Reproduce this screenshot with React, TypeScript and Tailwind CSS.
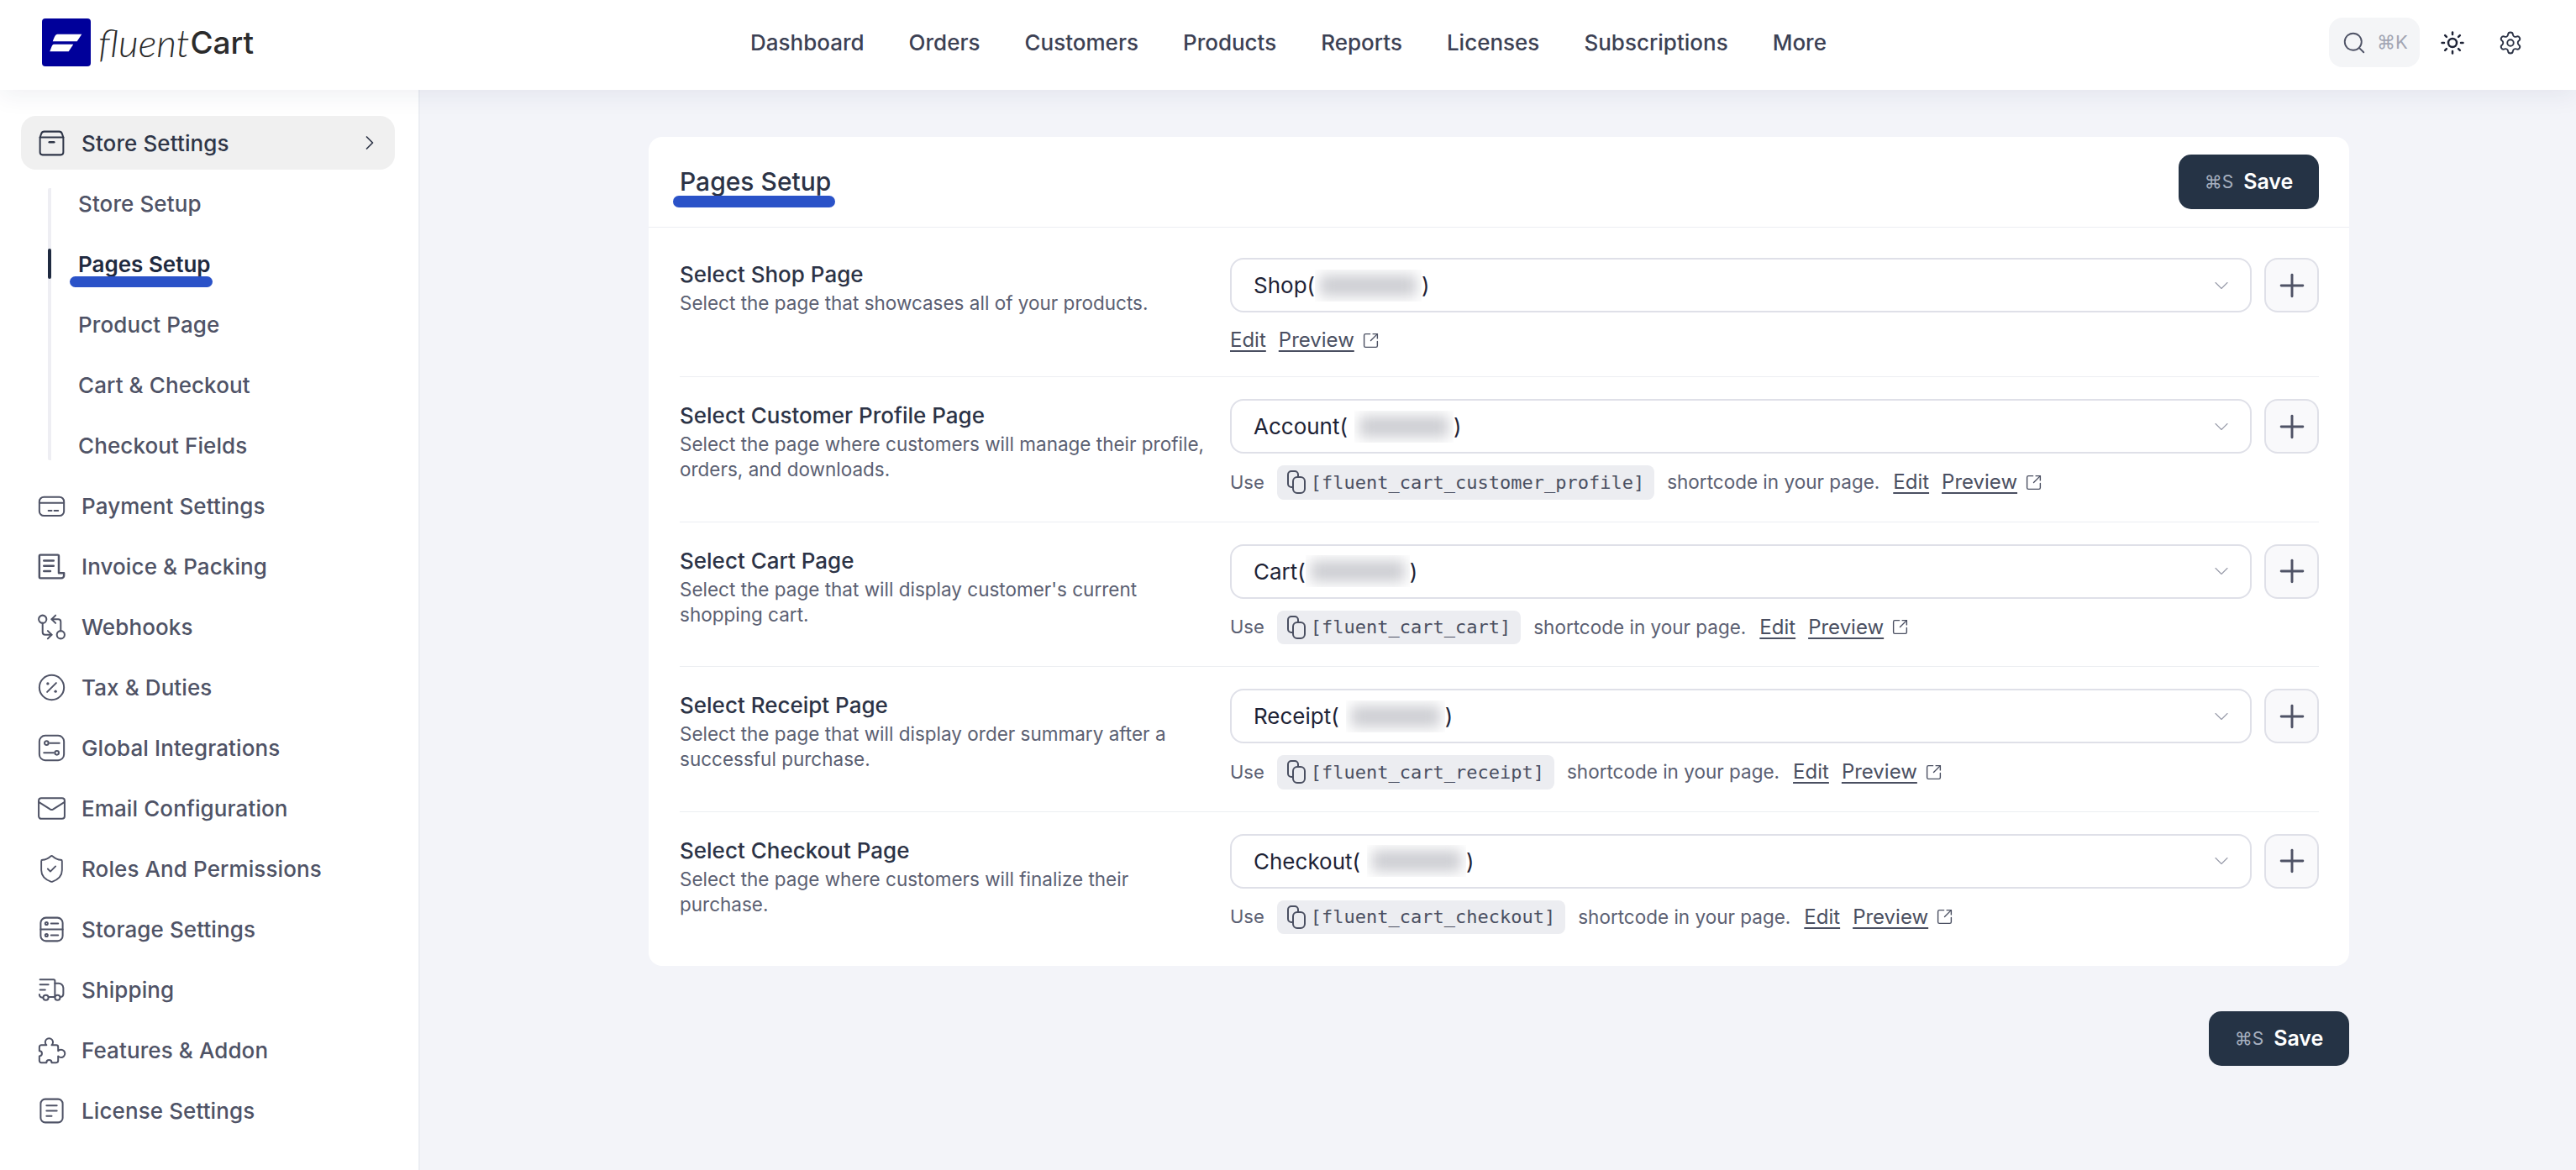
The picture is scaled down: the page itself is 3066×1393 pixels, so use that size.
import React from "react";
import {
  ChevronDown,
  ChevronRight,
  GitCompareArrows,
  Mail,
  Plus,
  Search,
  Settings,
  ShieldCheck,
  SquareArrowOutUpRight,
  Sun,
} from "lucide-react";

const navItems = ["Dashboard", "Orders", "Customers", "Products", "Reports", "Licenses", "Subscriptions", "More"];
const subItems = ["Store Setup", "Pages Setup", "Product Page", "Cart & Checkout", "Checkout Fields"];

function Svg({ children }: { children: React.ReactNode }) {
  return (
    <svg viewBox="0 0 24 24" fill="none" stroke="currentColor" strokeWidth="1.3" strokeLinecap="round" strokeLinejoin="round" className="h-[37px] w-[37px]">
      {children}
    </svg>
  );
}

function BoxIcon() {
  return (
    <Svg>
      <path d="M3 7.500 4 4.600A2.400 2.400 0 0 1 6.200 3h11.600A2.400 2.400 0 0 1 20 4.600l1 2.900V19a2 2 0 0 1-2 2H5a2 2 0 0 1-2-2Z" />
      <path d="M3 7.500h18" />
      <path d="M10.200 11.200h3.600" strokeWidth="1.600" />
    </Svg>
  );
}

function CardIcon() {
  return (
    <Svg>
      <rect x="2.500" y="5" width="19" height="14.500" rx="3.500" />
      <path d="M2.500 9.500h19" />
      <path d="M9.500 15.500h2.500M14 15.500h3" />
    </Svg>
  );
}

function InvoiceIcon() {
  return (
    <Svg>
      <path d="M17.500 17V3.800a.8.800 0 0 0-.8-.8H3.300a.8.800 0 0 0-.8.800v16.400a.8.800 0 0 0 .8.800H19.500a2 2 0 0 0 2-2v-2h-4" strokeWidth="1.600" />
      <path d="M6 7.500h7.500M6 11.500h7.500M6 15.500h5" strokeWidth="1.600" />
    </Svg>
  );
}

function PercentIcon() {
  return (
    <Svg>
      <circle cx="12" cy="12" r="9.500" />
      <path d="M15.500 8.500l-7 7" />
      <circle cx="9" cy="9" r="1.100" fill="currentColor" stroke="none" />
      <circle cx="15" cy="15" r="1.100" fill="currentColor" stroke="none" />
    </Svg>
  );
}

function SlidersIcon() {
  return (
    <Svg>
      <rect x="2.500" y="2.500" width="19" height="19" rx="4.500" />
      <circle cx="8" cy="8.200" r="1.500" />
      <path d="M10.500 8.200H18" />
      <circle cx="16" cy="15.800" r="1.500" />
      <path d="M6 15.800h7.500" />
    </Svg>
  );
}

function StorageIcon() {
  return (
    <Svg>
      <rect x="3.500" y="3" width="17" height="18" rx="4" />
      <path d="M3.500 12h17" />
      <circle cx="8" cy="7.500" r="1" />
      <path d="M11.500 7.500H17" />
      <circle cx="8" cy="16.500" r="1" />
      <path d="M11.500 16.500H17" />
    </Svg>
  );
}

function TruckIcon() {
  return (
    <Svg>
      <path d="M3 4h10.500a1 1 0 0 1 1 1v12.500H10" />
      <path d="M14.500 7h2.800a4 4 0 0 1 3.700 3.400V15a2.500 2.500 0 0 1-2 2.500" />
      <circle cx="7.500" cy="18" r="2" />
      <circle cx="16.500" cy="18" r="2" />
      <path d="M3 8h6.500M3 12h4M2.500 15.500c0 1.300.7 2.200 2.500 2.500" />
    </Svg>
  );
}

function PuzzleIcon() {
  return (
    <Svg>
      <path d="M4 8H8a3 3 0 1 1 4 0H15.500a1.500 1.500 0 0 1 1.500 1.500V12.500a3 3 0 1 1 0 4V20a1.500 1.500 0 0 1-1.500 1.500H12a2 2 0 0 0-4 0H4A1.500 1.500 0 0 1 2.500 20V16.500a2 2 0 0 0 0-4V9.500A1.500 1.500 0 0 1 4 8Z" />
    </Svg>
  );
}

function LicenseIcon() {
  return (
    <Svg>
      <rect x="3.500" y="3" width="17" height="18" rx="3.500" />
      <path d="M8 8h8M8 12h8M8 16h4" />
    </Svg>
  );
}

function CopyIcon() {
  return (
    <svg viewBox="0 0 22 30" fill="none" stroke="currentColor" strokeWidth="2" strokeLinecap="round" strokeLinejoin="round" className="h-[30px] w-[22px] shrink-0">
      <path d="M6 21H5a4 4 0 0 1-4-4V6a4 4 0 0 1 4-4h4a4 4 0 0 1 4 4v2" />
      <rect x="7" y="9" width="14" height="19" rx="5" />
    </svg>
  );
}

const sideItems: [string, React.ReactNode][] = [
  ["Payment Settings", <CardIcon />],
  ["Invoice & Packing", <InvoiceIcon />],
  ["Webhooks", <GitCompareArrows size={37} strokeWidth={1.3} />],
  ["Tax & Duties", <PercentIcon />],
  ["Global Integrations", <SlidersIcon />],
  ["Email Configuration", <Mail size={37} strokeWidth={1.3} />],
  ["Roles And Permissions", <ShieldCheck size={37} strokeWidth={1.2} />],
  ["Storage Settings", <StorageIcon />],
  ["Shipping", <TruckIcon />],
  ["Features & Addon", <PuzzleIcon />],
  ["License Settings", <LicenseIcon />],
];

function Logo() {
  return (
    <div className="flex items-center">
      <svg viewBox="0 0 58 57" className="h-[57px] w-[58px] shrink-0">
        <rect width="58" height="57" rx="4" fill="#00009a" />
        <path d="M18.300 18.700h29l-5.600 8.600h-29c2-4.800 3-8.600 5.600-8.600ZM14 30.700h23.300l-5.600 8.600H9.300c1.700-4.400 2.700-8.600 4.700-8.600Z" fill="#fff" />
      </svg>
      <span className="ml-[9px] font-['Lato'] text-[46px] font-light italic leading-none text-[#2b2b2b]">fluent</span>
      <span className="ml-[1px] text-[37px] font-medium leading-none text-[#2b2b2b]">Cart</span>
    </div>
  );
}

function Header() {
  return (
    <header className="relative z-10 flex h-[107px] shrink-0 items-center bg-white pb-[6px] pl-[50px] pr-[63px] shadow-[0_6px_28px_rgba(30,40,80,0.07)]">
      <div className="w-[843px] shrink-0">
        <Logo />
      </div>
      <nav className="flex gap-[53px] text-[26px] font-medium text-[#3c4154]">
        {navItems.map((n) => (
          <span key={n}>{n}</span>
        ))}
      </nav>
      <div className="ml-auto flex items-center">
        <div className="flex h-[59px] w-[108px] items-center rounded-[16px] bg-[#f4f5f7] pl-[15px]">
          <Search size={30} strokeWidth={1.5} className="text-[#4f5366]" />
          <span className="ml-[12px] text-[22px] text-[#a2a5b3]">⌘K</span>
        </div>
        <Sun size={30} strokeWidth={2} className="ml-[24px] text-[#1e2336]" />
        <Settings size={30} strokeWidth={1.5} className="ml-[39px] text-[#2c3346]" />
      </div>
    </header>
  );
}

function Sidebar() {
  return (
    <aside className="flex w-[500px] shrink-0 flex-col border-r-2 border-[#eceef3] bg-white pl-[25px] pr-[28px] pt-[31px] text-[26px] font-medium tracking-[0.1px] text-[#4f5366]">
      <div className="flex h-[64px] items-center rounded-[18px] bg-[#f0f0f0] pl-[18px] pr-[16px] text-[#2f3648]">
        <span className="flex w-[54px]">
          <BoxIcon />
        </span>
        <span>Store Settings</span>
        <ChevronRight size={28} strokeWidth={1.5} className="ml-auto" />
      </div>
      <div className="ml-[32px] mt-[22px] flex flex-col gap-[36px] rounded-[2px] border-l-4 border-[#eeeef3]">
        {subItems.map((s) => {
          const active = s === "Pages Setup";
          return (
            <div key={s} className={"relative flex h-[36px] items-center pl-[32px] " + (active ? "font-semibold tracking-normal text-[#1f2a40]" : "")}>
              {active && <span className="absolute -left-[4px] top-0 h-[36px] w-[4px] rounded-full bg-[#1f2a40]" />}
              {s}
              {active && <span className="absolute left-[22px] top-[33px] h-[13px] w-[170px] rounded-full bg-[#2a52c8]" />}
            </div>
          );
        })}
      </div>
      <div className="mt-[22px] flex flex-col gap-[8px]">
        {sideItems.map(([label, icon]) => (
          <div key={label} className="flex h-[64px] items-center pl-[18px]">
            <span className="flex w-[54px]">{icon}</span>
            {label}
          </div>
        ))}
      </div>
    </aside>
  );
}

function SaveButton() {
  return (
    <button className="flex h-[65px] w-[167px] items-center justify-center gap-[12px] rounded-[15px] bg-[#253345]">
      <span className="text-[21px] text-[#a7b0bf]">⌘S</span>
      <span className="text-[25px] font-semibold text-white">Save</span>
    </button>
  );
}

function PageSelect({ name, blur }: { name: string; blur: string }) {
  return (
    <div className="flex gap-[15px]">
      <div className="flex h-[65px] w-[1216px] items-center rounded-[16px] border-2 border-[#dfe0e8] bg-white pl-[26px] pr-[20px] text-[26px] text-[#1e2336]">
        <span>{name}(</span>
        <span className={"h-[38px] overflow-hidden p-[6px] " + blur}>
          <span className="block h-full w-full bg-[#cdced3] blur-[8px]" />
        </span>
        <span>)</span>
        <ChevronDown size={28} strokeWidth={1} className="ml-auto text-[#9a9dab]" />
      </div>
      <button className="flex h-[65px] w-[65px] items-center justify-center rounded-[16px] border-2 border-[#dfe0e8] bg-[#f9f9fb] text-[#4f5366]">
        <Plus size={44} strokeWidth={1.6} />
      </button>
    </div>
  );
}

function Links() {
  return (
    <>
      <span className="text-[24px] text-[#4a4f61] underline underline-offset-4">Edit</span>
      <span className="ml-[15px] text-[24px] text-[#4a4f61] underline underline-offset-4">Preview</span>
      <SquareArrowOutUpRight size={21} strokeWidth={1.6} className="ml-[9px] text-[#4a4f61]" />
    </>
  );
}

function Row({ title, desc, code, first, select }: { title: string; desc: string; code?: string; first?: boolean; select: React.ReactNode }) {
  return (
    <div className={"flex border-b border-[#eceef2] last:border-b-0 last:pb-[38px] " + (first ? "pb-[25px] pt-[36px]" : "pb-[26px] pt-[26px]")}>
      <div className="w-[655px] shrink-0 pt-[2px]">
        <div className="text-[26px] font-medium leading-[36px] text-[#2c3346]">{title}</div>
        <div className="mt-[1px] w-[630px] text-[22.5px] leading-[30px] text-[#5b6072]">{desc}</div>
      </div>
      <div className="flex-1">
        {select}
        {code ? (
          <div className="mt-[14px] flex h-[40.5px] items-center text-[22px] text-[#5b6072]">
            <span>Use</span>
            <span className="ml-[15px] flex h-full items-center gap-[6px] rounded-[8px] bg-[#ecedf1] px-[12px] font-['DejaVu_Sans_Mono'] text-[22px] text-[#4a4f61]">
              <CopyIcon />
              {code}
            </span>
            <span className="ml-[15px] mr-[16px] text-[22.5px]">shortcode in your page.</span>
            <Links />
          </div>
        ) : (
          <div className="mt-[15px] flex h-[36px] items-center">
            <Links />
          </div>
        )}
      </div>
    </div>
  );
}

export default function App() {
  return (
    <div className="flex min-h-[1393px] flex-col bg-[#f3f4f9] font-['Inter',sans-serif]">
      <Header />
      <div className="flex flex-1">
        <Sidebar />
        <main className="flex-1 pl-[272px] pr-[270px] pt-[56px]">
          <section className="rounded-[16px] bg-white">
            <div className="flex h-[108px] items-center justify-between border-b border-[#eceef2] pl-[37px] pr-[36px]">
              <h1 className="relative text-[30px] font-medium text-[#2c3346]">
                Pages Setup
                <span className="absolute -left-[8px] top-[39px] h-[14px] w-[193px] rounded-full bg-[#2a52c8]" />
              </h1>
              <SaveButton />
            </div>
            <div className="pl-[37px] pr-[36px]">
              <Row first title="Select Shop Page" desc="Select the page that showcases all of your products." select={<PageSelect name="Shop" blur="w-[127px]" />} />
              <Row title="Select Customer Profile Page" desc="Select the page where customers will manage their profile, orders, and downloads." code="[fluent_cart_customer_profile]" select={<PageSelect name="Account" blur="ml-[8px] w-[118px]" />} />
              <Row title="Select Cart Page" desc="Select the page that will display customer's current shopping cart." code="[fluent_cart_cart]" select={<PageSelect name="Cart" blur="w-[124px]" />} />
              <Row title="Select Receipt Page" desc="Select the page that will display order summary after a successful purchase." code="[fluent_cart_receipt]" select={<PageSelect name="Receipt" blur="ml-[8px] w-[118px]" />} />
              <Row title="Select Checkout Page" desc="Select the page where customers will finalize their purchase." code="[fluent_cart_checkout]" select={<PageSelect name="Checkout" blur="ml-[8px] w-[118px]" />} />
            </div>
          </section>
          <div className="mt-[54px] flex justify-end">
            <SaveButton />
          </div>
        </main>
      </div>
    </div>
  );
}
